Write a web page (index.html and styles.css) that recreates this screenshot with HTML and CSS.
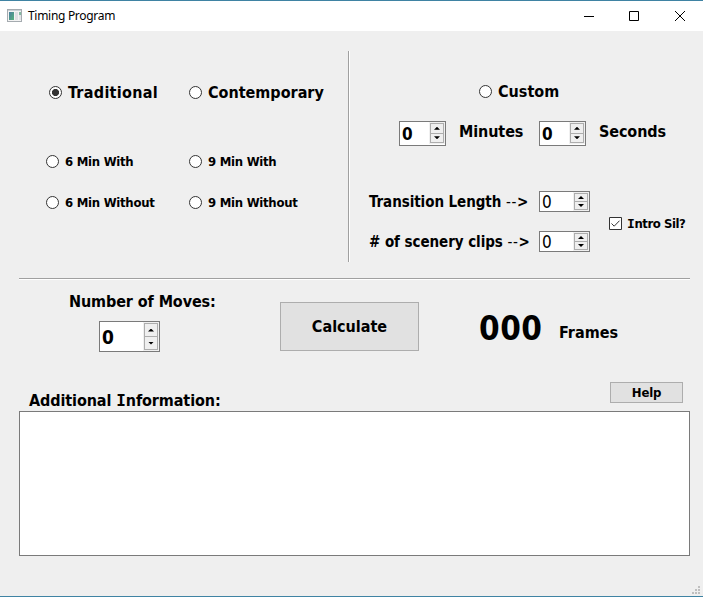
FILE: index.html
```html
<!DOCTYPE html>
<html lang="en">
<head>
<meta charset="utf-8">
<title>Timing Program</title>
<link rel="stylesheet" href="styles.css">
</head>
<body>
<div class="window">
  <header class="titlebar">
    <svg class="app-icon" width="15" height="13" viewBox="0 0 15 13" shape-rendering="crispEdges">
      <defs><linearGradient id="pane" x2="1" y2="1"><stop stop-color="#4a7e9f"/><stop offset="1" stop-color="#55b27c"/></linearGradient></defs>
      <rect x=".5" y=".5" width="14" height="12" fill="#f3f3f3" stroke="#a5abb0"/>
      <rect x="1" y="1" width="13" height="1" fill="#c8d0d5"/>
      <rect x="2" y="3" width="5" height="8" fill="url(#pane)"/>
      <rect x="8" y="3" width="3" height="8" fill="#dedfe3"/>
      <rect x="12" y="3" width="2" height="3" fill="#83b9a2"/>
      <rect x="12" y="6" width="2" height="5" fill="#e2e4e8"/>
    </svg>
    <span class="title">Timing Program</span>
    <div class="controls">
      <svg class="minimize" width="10" height="10" viewBox="0 0 10 10"><path d="M0 5.5h10"/></svg>
      <svg width="10" height="10" viewBox="0 0 10 10"><path d="M.5.5h9v9h-9z"/></svg>
      <svg width="10" height="10" viewBox="0 0 10 10"><path d="M0 0l10 10M10 0L0 10"/></svg>
    </div>
  </header>
  <main>
    <section class="options">
      <div class="presets">
        <label class="choice large traditional"><i class="radio on"></i><span>Traditional</span></label>
        <label class="choice large"><i class="radio"></i><span>Contemporary</span></label>
        <label class="choice small"><i class="radio"></i><span>6 Min With</span></label>
        <label class="choice small"><i class="radio"></i><span>9 Min With</span></label>
        <label class="choice small"><i class="radio"></i><span>6 Min Without</span></label>
        <label class="choice small"><i class="radio"></i><span>9 Min Without</span></label>
      </div>
      <div class="divider"></div>
      <div class="custom">
        <label class="choice custom-choice"><i class="radio"></i><span>Custom</span></label>
        <div class="duration">
          <div class="spin medium"><b>0</b><div class="steps"><i class="up"></i><i class="down"></i></div></div>
          <span class="minutes">Minutes</span>
          <div class="spin medium"><b>0</b><div class="steps"><i class="up"></i><i class="down"></i></div></div>
          <span class="seconds">Seconds</span>
        </div>
        <div class="details">
          <div class="fields">
            <span class="field-label">Transition Length <span class="dashes">--</span>&gt;</span>
            <div class="spin thin"><b>0</b><div class="steps"><i class="up"></i><i class="down"></i></div></div>
            <span class="field-label"># of scenery clips <span class="dashes">--</span>&gt;</span>
            <div class="spin thin"><b>0</b><div class="steps"><i class="up"></i><i class="down"></i></div></div>
          </div>
          <label class="choice intro"><svg width="13" height="13" viewBox="0 0 13 13"><path d="M.5.5h12v12H.5z"/><path d="M2.5 6.5l2.7 2.7 5.3-5.5"/></svg><span><span class="slab">I</span>ntro Sil?</span></label>
        </div>
      </div>
    </section>
    <hr>
    <section class="actions">
      <div class="moves">
        <span class="moves-label">Number of Moves:</span>
        <div class="spin tall"><b>0</b><div class="steps"><i class="up"></i><i class="down"></i></div></div>
      </div>
      <button class="calculate"><span>Calculate</span></button>
      <output>000</output>
      <span class="frames">Frames</span>
    </section>
    <section class="info">
      <div class="info-head"><span class="info-label">Additional <span class="slab">I</span>nformation:</span><button class="help"><span>Help</span></button></div>
      <div class="log"></div>
    </section>
    <svg class="grip" width="8" height="8" viewBox="0 0 8 8"><path d="M6 0h2v2H6zM3 3h2v2H3zM6 3h2v2H6zM0 6h2v2H0zM3 6h2v2H3zM6 6h2v2H6z"/></svg>
  </main>
</div>
</body>
</html>
```
FILE: styles.css
```css
* { box-sizing: border-box; }
body { margin: 0; }
.window {
  width: 703px; height: 597px; background: #efefef; color: #000;
  border-top: 1px solid #3f83a3; border-bottom: 1px solid #3f83a3;
  font: bold 16px/20px "DejaVu Sans Condensed", "DejaVu Sans", sans-serif;
  font-stretch: condensed; white-space: nowrap; overflow: hidden;
  display: flex; flex-direction: column;
}
.titlebar { height: 30px; background: #fff; display: flex; align-items: center; padding: 0 18px 0 7px; flex: none; }
.app-icon { margin-top: -2px; }
.title { font: 12px/16px "Noto Sans", sans-serif; margin-left: 6px; letter-spacing: -.3px; }
.controls { margin-left: auto; display: flex; gap: 36px; }
.controls svg { fill: none; stroke: #000; }
.controls .minimize { margin-right: -1px; }
main { flex: 1; position: relative; }
.options { height: 247px; display: flex; }
.presets {
  width: 348px; padding: 50px 0 0 46px; display: grid;
  grid-template-columns: 143px 1fr; grid-template-rows: 60px 41px 41px;
  align-content: start; align-items: center;
}
.choice { display: flex; align-items: center; gap: 6px; }
.large { height: 23px; align-self: start; }
.large span { padding-top: 1px; }
.traditional { padding-left: 3px; letter-spacing: .3px; }
.radio { width: 13px; height: 13px; border: 1px solid #333; border-radius: 50%; background: #fff; flex: none; }
.radio.on { background: radial-gradient(circle, #333 3.2px, #fff 3.9px); }
.small, .intro, .help { font-size: 13px; line-height: 16px; }
.small { letter-spacing: -.27px; }
.small span { padding-top: 1px; }
.divider { width: 2px; height: 211px; margin-top: 20px; background: linear-gradient(90deg, #a0a0a0 50%, #fff 50%); }
.custom { flex: 1; padding: 49px 0 0 19px; }
.custom-choice { margin-left: 110px; height: 23px; }
.custom-choice span { padding-top: 1px; }
.duration { display: flex; margin: 18px 0 0 30px; }
.minutes { margin: 1px 0 0 13px; width: 80px; letter-spacing: -.1px; }
.seconds { margin: 1px 0 0 13px; letter-spacing: -.1px; }
.spin { background: #fff; border: 1px solid #7a7a7a; display: flex; align-items: center; padding: 1px; flex: none; }
.spin b { flex: 1; padding-left: 1px; font-size: 17px; }
.steps { width: 14px; align-self: stretch; border: 1px solid #adadad; background: #efefef; display: flex; flex-direction: column; box-shadow: 0 0 0 1px #f0f0f0; }
.steps i { flex: 1; display: flex; align-items: center; justify-content: center; }
.steps i + i { border-top: 1px solid #adadad; }
.steps i::before { content: ""; width: 6px; height: 3px; background: #000; clip-path: polygon(50% 0, 100% 100%, 0 100%); }
.steps .down::before { clip-path: polygon(0 0, 100% 0, 50% 100%); }
.medium { width: 47px; height: 25px; padding-bottom: 2px; }
.medium b { padding-top: 1px; }
.thin { width: 51px; height: 21px; }
.thin b { font-weight: normal; }
.tall { width: 61px; height: 31px; }
.tall b { font-size: 19px; }
.details { display: flex; margin-top: 45px; }
.fields { display: grid; grid-template-columns: 170px 51px; row-gap: 19px; }
.field-label { height: 21px; font-size: 15px; line-height: 23px; letter-spacing: -.06px; }
.dashes { font-weight: normal; letter-spacing: .6px; }
.intro { margin: 24px 0 0 19px; height: 16px; gap: 5px; letter-spacing: -.45px; }
.intro svg { fill: none; stroke: #333; background: #fff; }
.intro > span { padding-top: 1px; }
.slab { font-family: "DejaVu Sans Mono", monospace; line-height: 1; }
hr { height: 2px; margin: 0 13px 0 19px; border: 0; background: linear-gradient(#a0a0a0 50%, #fff 50%); }
.actions { height: 102px; display: flex; align-items: flex-start; }
.moves { width: 280px; padding: 12px 0 0 69px; }
.moves .spin { margin: 9px 0 0 30px; }
.moves-label { display: block; letter-spacing: -.1px; }
button { font: inherit; color: inherit; background: #e1e1e1; border: 1px solid #adadad; padding: 0; }
.calculate { width: 139px; height: 49px; margin-top: 22px; padding-top: 1px; }
output { width: 80px; margin: 29px 0 0 60px; font-size: 33px; line-height: 40px; letter-spacing: .5px; }
.frames { margin-top: 43px; }
.info { padding: 0 13px 0 19px; }
.info-head { display: flex; justify-content: space-between; height: 29px; padding: 0 7px 0 10px; }
.info-label { margin-top: 9px; letter-spacing: -.1px; line-height: 20px; }
.help { width: 73px; height: 21px; padding-top: 1px; letter-spacing: -.2px; }
.log { height: 145px; background: #fff; border: 1px solid #7a7a7a; }
.grip { position: absolute; right: 3px; bottom: 2px; fill: #bfbfbf; }
```
